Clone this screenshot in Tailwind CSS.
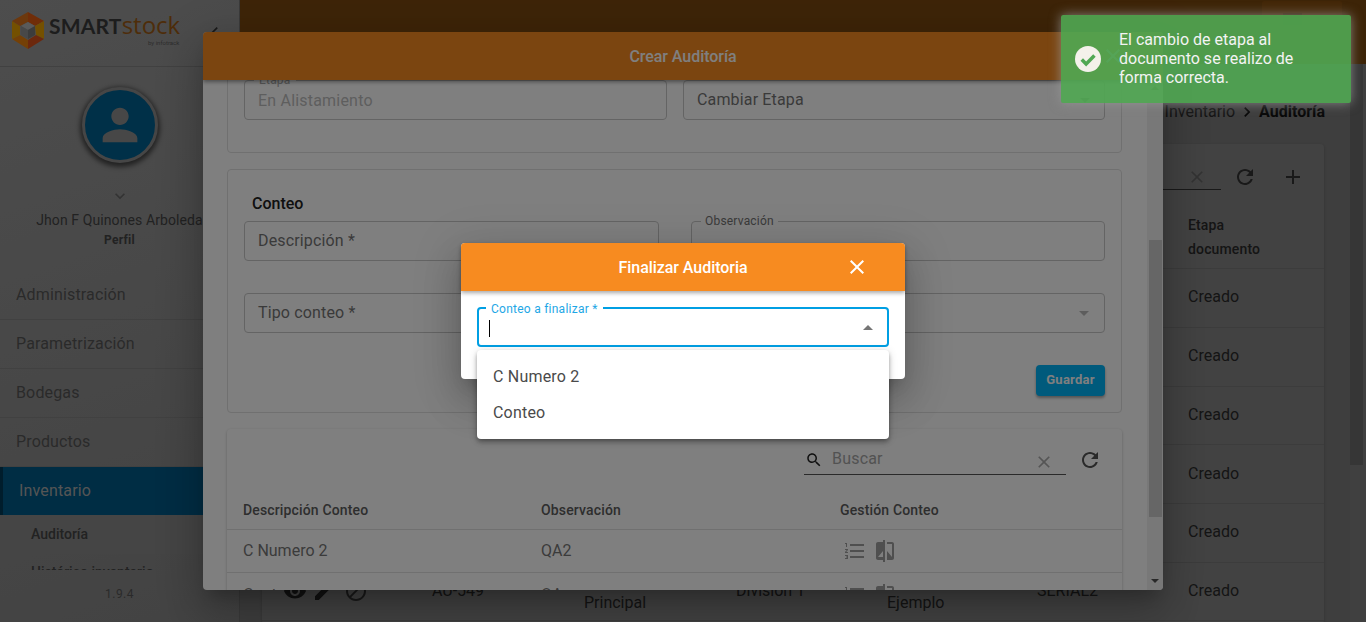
<!DOCTYPE html>
<html lang="es">
<head>
<meta charset="utf-8">
<title>Crear Auditoría</title>
<script src="https://cdn.jsdelivr.net/npm/@tailwindcss/browser@4"></script>
</head>
<body class="m-0 overflow-hidden font-['Roboto',sans-serif]">
<div class="relative w-[1366px] h-[622px] overflow-hidden flex bg-[#808080]">

  <!-- SIDEBAR -->
  <aside class="w-[240px] h-[622px] shrink-0 flex flex-col bg-[linear-gradient(160deg,#9a9a9a,#868686)] border-r border-[#747474]">
    <div class="h-[67px] shrink-0 border-b border-[#828282] relative flex items-start">
      <svg class="ml-[11px] mt-[12px] shrink-0" width="34" height="37" viewBox="0 0 34 37">
        <polygon points="17,0 33,9 24,14 17,10" fill="#e05a10"/>
        <polygon points="33,9 33,27 25,23 24,14" fill="#e8a000"/>
        <polygon points="33,27 17,37 17,28 25,23" fill="#d8501a"/>
        <polygon points="17,37 1,27 9,23 17,28" fill="#e8800c"/>
        <polygon points="1,27 1,9 9,14 9,23" fill="#e8a000"/>
        <polygon points="1,9 17,0 17,10 9,14" fill="#d8701a"/>
        <polygon points="17,10 24,14 17,18 10,14" fill="#b4b4b4"/>
        <polygon points="10,14 17,18 17,27 10,23" fill="#909090"/>
        <polygon points="24,14 17,18 17,27 24,23" fill="#787878"/>
      </svg>
      <div class="ml-[4px] mt-[13px] w-[135px] leading-none whitespace-nowrap flex flex-col">
        <div class="h-[24px] leading-[24px]"><span class="font-['Lato',sans-serif] font-bold text-[21px] text-[#3a3a3a] tracking-[0.2px]">SMART</span><span class="font-['Open_Sans',sans-serif] text-[24px] text-[#9c5a14]">stock</span></div>
        <div class="mt-[2px] pl-[99px] text-[6px] leading-[7px] text-[#5a5a5a]">by infotrack</div>
      </div>
      <svg class="absolute left-[205px] top-[20px]" width="20" height="24" viewBox="0 0 24 24"><path fill="#333" d="M15.41 7.41L14 6l-6 6 6 6 1.41-1.41L10.83 12z"/></svg>
    </div>
    <div class="h-[204px] shrink-0 flex flex-col items-center">
      <div class="mt-[20px] w-[76px] h-[76px] shrink-0 rounded-full bg-[#006090] border-[3px] border-[#8c8c8c] shadow-[0_2px_5px_2px_rgba(0,0,0,0.55)] flex items-center justify-center">
        <svg width="52" height="52" viewBox="0 0 24 24"><path fill="#8f8f8f" d="M12 12c2.21 0 4-1.79 4-4s-1.79-4-4-4-4 1.79-4 4 1.79 4 4 4zm0 2c-2.67 0-8 1.34-8 4v2h16v-2c0-2.66-5.33-4-8-4z"/></svg>
      </div>
      <svg class="mt-[23px]" width="20" height="20" viewBox="0 0 24 24"><path fill="#666" d="M16.59 8.59L12 13.17 7.41 8.59 6 10l6 6 6-6z"/></svg>
      <div class="mt-[4px] text-[14px] leading-[20px] tracking-[0.1px] text-[#444] whitespace-nowrap">Jhon F Quinones Arboleda</div>
      <div class="text-[12px] leading-[20px] font-bold tracking-[0.3px] text-[#444]">Perfil</div>
    </div>
    <nav class="h-[299px] shrink-0 overflow-hidden">
      <div class="h-[49px] border-b border-[#828282] pl-[16px] pr-[36px] flex items-center justify-between text-[16px] tracking-[0.15px] text-[#555]">Administración<svg class="-mr-[30px]" width="20" height="20" viewBox="0 0 24 24"><path fill="#666" d="M10 6L8.59 7.41 13.17 12l-4.58 4.59L10 18l6-6z"/></svg></div>
      <div class="h-[49px] border-b border-[#828282] pl-[16px] pr-[36px] flex items-center justify-between text-[16px] tracking-[0.15px] text-[#555]">Parametrización<svg class="-mr-[30px]" width="20" height="20" viewBox="0 0 24 24"><path fill="#666" d="M10 6L8.59 7.41 13.17 12l-4.58 4.59L10 18l6-6z"/></svg></div>
      <div class="h-[49px] border-b border-[#828282] pl-[16px] pr-[36px] flex items-center justify-between text-[16px] tracking-[0.15px] text-[#555]">Bodegas<svg class="-mr-[30px]" width="20" height="20" viewBox="0 0 24 24"><path fill="#666" d="M10 6L8.59 7.41 13.17 12l-4.58 4.59L10 18l6-6z"/></svg></div>
      <div class="h-[49px] border-b border-[#828282] pl-[16px] pr-[36px] flex items-center justify-between text-[16px] tracking-[0.15px] text-[#555]">Productos<svg class="-mr-[30px]" width="20" height="20" viewBox="0 0 24 24"><path fill="#666" d="M10 6L8.59 7.41 13.17 12l-4.58 4.59L10 18l6-6z"/></svg></div>
      <div class="h-[48px] bg-[#005a88] border-l-[3px] border-[#003a58] pl-[16px] pr-[36px] flex items-center justify-between text-[16px] tracking-[0.15px] text-[#aaa]">Inventario<svg class="-mr-[30px]" width="20" height="20" viewBox="0 0 24 24"><path fill="#aaa" d="M16.59 8.59L12 13.17 7.41 8.59 6 10l6 6 6-6z"/></svg></div>
      <div class="h-[39px] bg-[#8a8a8a] pl-[31px] flex items-center text-[14px] font-medium text-[#444]">Auditoría</div>
      <div class="h-[36px] pl-[31px] flex items-center text-[14px] font-medium text-[#444]">Histórico inventario</div>
    </nav>
    <div class="mt-[12px] text-center text-[12px] leading-[24px] tracking-[0.5px] text-[#555]">1.9.4</div>
  </aside>

  <!-- MAIN PAGE -->
  <main class="flex-1 min-w-0 flex flex-col h-[622px]">
    <header class="h-[64px] shrink-0 bg-[#7b480f] flex items-center justify-end pr-[24px]">
      <div class="w-[80px] h-[35px] -mt-[27px] rounded-[2px] bg-[#874f10] flex items-center pl-[21px] gap-[12px]">
        <div class="w-[19px] h-[12px] bg-[#6d400b]"></div>
        <div class="w-0 h-0 border-x-[5px] border-x-transparent border-t-[5px] border-t-[#6d400b]"></div>
      </div>
    </header>
    <div class="flex-1 flex min-h-0">
      <div class="w-[1110px] shrink-0 pl-[22px] pr-[26px] bg-[#7c7c7c]">
        <div class="h-[80px] -mr-[1px] flex items-end justify-end pb-[22px] text-[16px] leading-[20px] text-[#2a2a2a] gap-[2px]">
          <span>Inventario</span>
          <svg width="20" height="20" viewBox="0 0 24 24"><path fill="#111" d="M10 6L8.59 7.41 13.17 12l-4.58 4.59L10 18l6-6z"/></svg>
          <span class="font-bold text-[#111]">Auditoría</span>
        </div>
        <section class="bg-[#858585] rounded-[4px] shadow-[0_1px_3px_rgba(0,0,0,0.2)] h-[480px] overflow-hidden">
          <div class="h-[60px] flex items-start justify-end pt-[21px] pr-[19px]">
            <div class="w-[120px] h-[25px] border-b border-[#333] flex justify-end pr-[14px] pt-[2px]">
              <svg width="20" height="20" viewBox="0 0 24 24"><path fill="#666" d="M19 6.41L17.59 5 12 10.59 6.41 5 5 6.41 10.59 12 5 17.59 6.41 19 12 13.41 17.59 19 19 17.59 13.41 12z"/></svg>
            </div>
            <svg class="ml-[12px]" width="24" height="24" viewBox="0 0 24 24"><path fill="#333" d="M17.65 6.35C16.2 4.9 14.21 4 12 4c-4.42 0-7.99 3.58-7.99 8s3.57 8 7.99 8c3.73 0 6.84-2.55 7.73-6h-2.08c-.82 2.33-3.04 4-5.65 4-3.31 0-6-2.69-6-6s2.69-6 6-6c1.66 0 3.14.69 4.22 1.78L13 11h7V4l-2.35 2.35z"/></svg>
            <svg class="ml-[24px]" width="24" height="24" viewBox="0 0 24 24"><path fill="#333" d="M19 13h-6v6h-2v-6H5v-2h6V5h2v6h6v2z"/></svg>
          </div>
          <div class="h-[65px] pl-[926px] pt-[2px] border-b border-[#787878] flex items-center text-[14px] leading-[24px] font-medium tracking-[0.15px] text-[#2a2a2a]"><span>Etapa<br>documento</span></div>
          <div class="h-[59px] pl-[926px] pb-[2px] border-b border-[#787878] flex items-center text-[16px] text-[#2a2a2a]">Creado</div>
          <div class="h-[59px] pl-[926px] pb-[2px] border-b border-[#787878] flex items-center text-[16px] text-[#2a2a2a]">Creado</div>
          <div class="h-[58px] pl-[926px] pb-[2px] border-b border-[#787878] flex items-center text-[16px] text-[#2a2a2a]">Creado</div>
          <div class="h-[59px] pl-[926px] border-b border-[#787878] flex items-center text-[16px] text-[#2a2a2a]">Creado</div>
          <div class="h-[59px] pl-[926px] pb-[2px] border-b border-[#787878] flex items-center text-[16px] text-[#2a2a2a]">Creado</div>
          <div class="h-[58px] grid grid-cols-[150px_152px_152px_151px_150px_151px_126px] pl-[20px] pb-[2px] items-center text-[16px] leading-[22px] text-[#2a2a2a] border-b border-[#787878]">
            <div class="flex items-center">
              <svg class="ml-[1px]" width="24" height="24" viewBox="0 0 24 24"><path fill="#222" d="M12 4.5C7 4.5 2.73 7.61 1 12c1.73 4.39 6 7.5 11 7.5s9.27-3.11 11-7.5c-1.73-4.39-6-7.5-11-7.5zM12 17c-2.76 0-5-2.24-5-5s2.24-5 5-5 5 2.24 5 5-2.24 5-5 5zm0-8c-1.66 0-3 1.34-3 3s1.34 3 3 3 3-1.34 3-3-1.34-3-3-3z"/></svg>
              <svg class="ml-[5px]" width="24" height="24" viewBox="0 0 24 24"><path fill="#222" d="M3 17.25V21h3.75L17.81 9.94l-3.75-3.75L3 17.25zM20.71 7.04c.39-.39.39-1.02 0-1.41l-2.34-2.34c-.39-.39-1.02-.39-1.41 0l-1.83 1.83 3.75 3.75 1.83-1.83z"/></svg>
              <svg class="ml-[8px]" width="24" height="24" viewBox="0 0 24 24"><path fill="#333" d="M12 2C6.48 2 2 6.48 2 12s4.48 10 10 10 10-4.48 10-10S17.52 2 12 2zM4 12c0-4.42 3.58-8 8-8 1.85 0 3.55.63 4.9 1.69L5.69 16.9C4.63 15.55 4 13.85 4 12zm8 8c-1.85 0-3.55-.63-4.9-1.69L18.31 7.1C19.37 8.45 20 10.15 20 12c0 4.42-3.58 8-8 8z"/></svg>
            </div>
            <div>AU-549</div>
            <div class="mt-[2px]">Bodega<br>Principal</div>
            <div>División 1</div>
            <div class="mt-[2px]">Producto<br>Ejemplo</div>
            <div>SERIAL2</div>
            <div>Creado</div>
          </div>
        </section>
      </div>
      <div class="w-[15px] shrink-0 bg-[#808080]">
        <div class="w-[13px] h-[401px] bg-[#6c6c6c]"></div>
      </div>
    </div>
  </main>

  <!-- MODAL: Crear Auditoría -->
  <div class="absolute isolate left-[203px] top-[32px] w-[960px] h-[558px] bg-white rounded-[4px] overflow-hidden flex flex-col shadow-[0_11px_15px_-7px_rgba(0,0,0,0.2),0_24px_38px_3px_rgba(0,0,0,0.14),0_9px_46px_8px_rgba(0,0,0,0.12)]">
    <div class="relative z-10 h-[48px] shrink-0 bg-[#f78b20] shadow-[0_2px_4px_rgba(0,0,0,0.4)] flex items-center justify-center pt-[1px] text-[16px] font-medium tracking-[-0.05px] text-white">
      Crear Auditoría
      <svg class="absolute right-[38px] top-[12px]" width="24" height="24" viewBox="0 0 24 24"><path fill="#fff" d="M19 6.41L17.59 5 12 10.59 6.41 5 5 6.41 10.59 12 5 17.59 6.41 19 12 13.41 17.59 19 19 17.59 13.41 12z"/></svg>
    </div>
    <div class="flex flex-1 min-h-0">
      <div class="w-[944px] shrink-0 overflow-hidden pl-[24px] pr-[25px]">
        <section class="-mt-[20px] h-[93px] rounded-[4px] border border-[#e0e0e0] pt-[19px] px-[16px] grid grid-cols-[423px_422px] gap-x-[16px]">
          <div class="relative h-[40px] rounded-[4px] border border-[#c8c8c8] flex items-center pl-[13px] pt-[1px] text-[16px] tracking-[0.2px] text-[#bdbdbd]">
            En Alistamiento
            <span class="absolute left-[9px] -top-[8px] bg-white px-[5px] text-[12px] leading-[14px] text-[#aaa]">Etapa</span>
          </div>
          <div class="relative h-[40px] rounded-[4px] border border-[#c8c8c8] flex items-center pl-[13px] text-[16px] tracking-[0.15px] text-[#757575]">
            Cambiar Etapa
            <div class="absolute right-[14px] top-[17px] w-0 h-0 border-x-[5px] border-x-transparent border-t-[5px] border-t-[#999]"></div>
          </div>
        </section>
        <section class="mt-[16px] h-[244px] rounded-[4px] border border-[#e0e0e0] px-[16px]">
          <div class="h-[51px] pt-[24px] pl-[8px] text-[16px] leading-[20px] font-medium text-[#212121]">Conteo</div>
          <div class="grid grid-cols-[415px_414px] gap-x-[32px] gap-y-[32px]">
            <div class="h-[40px] rounded-[4px] border border-[#c8c8c8] flex items-center pl-[13px] text-[16px] tracking-[0.15px] text-[#757575]">Descripción *</div>
            <div class="relative h-[40px] rounded-[4px] border border-[#c8c8c8]">
              <span class="absolute left-[9px] -top-[8px] bg-white px-[4px] text-[12px] leading-[14px] tracking-[0.2px] text-[#757575]">Observación</span>
            </div>
            <div class="h-[40px] rounded-[4px] border border-[#c8c8c8] flex items-center pl-[13px] text-[16px] tracking-[0.15px] text-[#757575]">Tipo conteo *</div>
            <div class="relative h-[40px] rounded-[4px] border border-[#c8c8c8]">
              <div class="absolute right-[15px] top-[17px] w-0 h-0 border-x-[5px] border-x-transparent border-t-[5px] border-t-[#bbb]"></div>
            </div>
          </div>
          <div class="mt-[32px] flex justify-end">
            <div class="w-[69px] h-[31px] pb-[2px] rounded-[4px] bg-[#00b4f8] shadow-[0_2px_3px_rgba(0,0,0,0.35)] flex items-center justify-center text-[13px] font-bold tracking-[0.25px] text-white">Guardar</div>
          </div>
        </section>
        <section class="mt-[16px] h-[200px] rounded-[4px] shadow-[0_1px_3px_rgba(0,0,0,0.25)]">
          <div class="h-[58px] flex items-start justify-end pr-[20px] pt-[17px]">
            <div class="w-[262px] h-[29px] border-b border-[#555] flex items-start">
              <svg class="ml-[1px] mt-[5px]" width="18" height="18" viewBox="0 0 24 24"><path fill="#222" d="M15.5 14h-.79l-.28-.27C15.41 12.59 16 11.11 16 9.5 16 5.91 13.09 3 9.5 3S3 5.91 3 9.5 5.91 16 9.5 16c1.61 0 3.09-.59 4.23-1.57l.27.28v.79l5 4.99L20.49 19l-4.99-5zm-6 0C7.01 14 5 11.99 5 9.5S7.01 5 9.5 5 14 7.01 14 9.5 11.99 14 9.5 14z"/></svg>
              <span class="ml-[9px] mt-[3px] flex-1 text-[16px] leading-[20px] tracking-[0.2px] text-[#a5a5a5]">Buscar</span>
              <svg class="mr-[12px] mt-[6px]" width="20" height="20" viewBox="0 0 24 24"><path fill="#aaa" d="M19 6.41L17.59 5 12 10.59 6.41 5 5 6.41 10.59 12 5 17.59 6.41 19 12 13.41 17.59 19 19 17.59 13.41 12z"/></svg>
            </div>
            <svg class="ml-[12px] mt-[2px]" width="24" height="24" viewBox="0 0 24 24"><path fill="#555" d="M17.65 6.35C16.2 4.9 14.21 4 12 4c-4.42 0-7.99 3.58-7.99 8s3.57 8 7.99 8c3.73 0 6.84-2.55 7.73-6h-2.08c-.82 2.33-3.04 4-5.65 4-3.31 0-6-2.69-6-6s2.69-6 6-6c1.66 0 3.14.69 4.22 1.78L13 11h7V4l-2.35 2.35z"/></svg>
          </div>
          <div class="h-[43px] grid grid-cols-[298px_299px_1fr] pl-[16px] pt-[4px] items-center border-b border-[#e0e0e0] text-[14px] font-medium tracking-[0.15px] text-[#5c5c5c]">
            <div>Descripción Conteo</div><div>Observación</div><div>Gestión Conteo</div>
          </div>
          <div class="h-[43px] grid grid-cols-[298px_299px_1fr] pl-[16px] items-center border-b border-[#e0e0e0] text-[16px] text-[#777]">
            <div>C Numero 2</div><div>QA2</div>
            <div class="flex items-center gap-[6px] pl-[3px]">
              <svg width="24" height="24" viewBox="0 0 24 24"><path fill="#9e9e9e" d="M2 17h2v.5H3v1h1v.5H2v1h3v-4H2v1zm1-9h1V4H2v1h1v3zm-1 3h1.8L2 13.1v.9h3v-1H3.2L5 10.9V10H2v1zm5-6v2h14V5H7zm0 14h14v-2H7v2zm0-6h14v-2H7v2z"/></svg>
              <svg width="24" height="24" viewBox="0 0 24 24"><path fill="#9e9e9e" d="M10 3H5c-1.1 0-2 .9-2 2v14c0 1.1.9 2 2 2h5v2h2V1h-2v2zm0 15H5l5-6v6zm9-15h-5v2h5v13l-5-6v9h5c1.1 0 2-.9 2-2V5c0-1.1-.9-2-2-2z"/></svg>
            </div>
          </div>
          <div class="h-[43px] grid grid-cols-[298px_299px_1fr] pl-[16px] items-center text-[16px] text-[#777]">
            <div>Conteo</div><div>QA</div>
            <div class="flex items-center gap-[6px] pl-[3px]">
              <svg width="24" height="24" viewBox="0 0 24 24"><path fill="#9e9e9e" d="M2 17h2v.5H3v1h1v.5H2v1h3v-4H2v1zm1-9h1V4H2v1h1v3zm-1 3h1.8L2 13.1v.9h3v-1H3.2L5 10.9V10H2v1zm5-6v2h14V5H7zm0 14h14v-2H7v2zm0-6h14v-2H7v2z"/></svg>
              <svg width="24" height="24" viewBox="0 0 24 24"><path fill="#9e9e9e" d="M10 3H5c-1.1 0-2 .9-2 2v14c0 1.1.9 2 2 2h5v2h2V1h-2v2zm0 15H5l5-6v6zm9-15h-5v2h5v13l-5-6v9h5c1.1 0 2-.9 2-2V5c0-1.1-.9-2-2-2z"/></svg>
            </div>
          </div>
        </section>
      </div>
      <!-- modal scrollbar -->
      <div class="w-[16px] shrink-0 bg-[#f0f0f0] relative flex flex-col items-center">
        <div class="mt-[6px] w-0 h-0 border-x-[4px] border-x-transparent border-b-[4px] border-b-[#999]"></div>
        <div class="mt-[150px] w-[13px] h-[277px] bg-[#cdcdcd]"></div>
        <div class="mt-[62px] w-0 h-0 border-x-[4px] border-x-transparent border-t-[4px] border-t-[#505050]"></div>
      </div>
    </div>
  </div>

  <!-- SCRIM -->
  <div class="absolute inset-0 bg-black/50"></div>

  <!-- MODAL: Finalizar Auditoria -->
  <div class="absolute left-[461px] top-[243px] w-[444px] h-[136px] bg-white rounded-[4px] shadow-[0_11px_15px_-7px_rgba(0,0,0,0.2),0_24px_38px_3px_rgba(0,0,0,0.14),0_9px_46px_8px_rgba(0,0,0,0.12)]">
    <div class="relative h-[48px] bg-[#f78b20] rounded-t-[4px] shadow-[0_2px_4px_rgba(0,0,0,0.35)] flex items-center justify-center pt-[1px] text-[16px] font-medium tracking-[-0.05px] text-white">
      Finalizar Auditoria
      <svg class="absolute left-[384px] top-[12px]" width="24" height="24" viewBox="0 0 24 24"><path fill="#fff" d="M19 6.41L17.59 5 12 10.59 6.41 5 5 6.41 10.59 12 5 17.59 6.41 19 12 13.41 17.59 19 19 17.59 13.41 12z"/></svg>
    </div>
    <div class="px-[16px] pt-[16px]">
      <div class="relative h-[40px] rounded-[4px] border-2 border-[#009fe3]">
        <span class="absolute left-[7px] -top-[7px] bg-white px-[5px] text-[12px] leading-[14px] tracking-[0.25px] text-[#1ea7e6]">Conteo a finalizar *</span>
        <div class="absolute left-[10px] top-[11px] w-px h-[17px] bg-black"></div>
        <div class="absolute right-[14px] top-[16px] w-0 h-0 border-x-[5px] border-x-transparent border-b-[5px] border-b-[#757575]"></div>
      </div>
    </div>
  </div>
  <div class="absolute left-[477px] top-[350px] w-[412px] h-[89px] bg-white rounded-[4px] shadow-[0_2px_4px_-1px_rgba(0,0,0,0.3),0_4px_5px_rgba(0,0,0,0.16),0_1px_10px_rgba(0,0,0,0.14)] pt-[9px] text-[16px] tracking-[0.2px] text-[#4a4a4a]">
    <div class="h-[36px] pl-[16px] flex items-center">C Numero 2</div>
    <div class="h-[36px] pl-[16px] flex items-center">Conteo</div>
  </div>

  <!-- TOAST -->
  <div class="absolute left-[1061px] top-[15px] w-[290px] h-[88px] rounded-[2px] bg-[#51a853]/90 shadow-[0_0_12px_rgba(153,153,153,0.8)] flex items-center pl-[14px] pr-[30px] text-[16px] leading-[19px] text-[#f3f3f3]">
    <svg class="shrink-0" width="26" height="26" viewBox="0 0 25 25"><circle cx="12.5" cy="12.5" r="12.5" fill="#f4f1ea"/><path d="M6.5 13l4.2 4.2 8-8" fill="none" stroke="#51a853" stroke-width="3.4"/></svg>
    <div class="ml-[18px] pb-[2px]">El cambio de etapa al documento se realizo de forma correcta.</div>
  </div>
</div>
</body>
</html>
